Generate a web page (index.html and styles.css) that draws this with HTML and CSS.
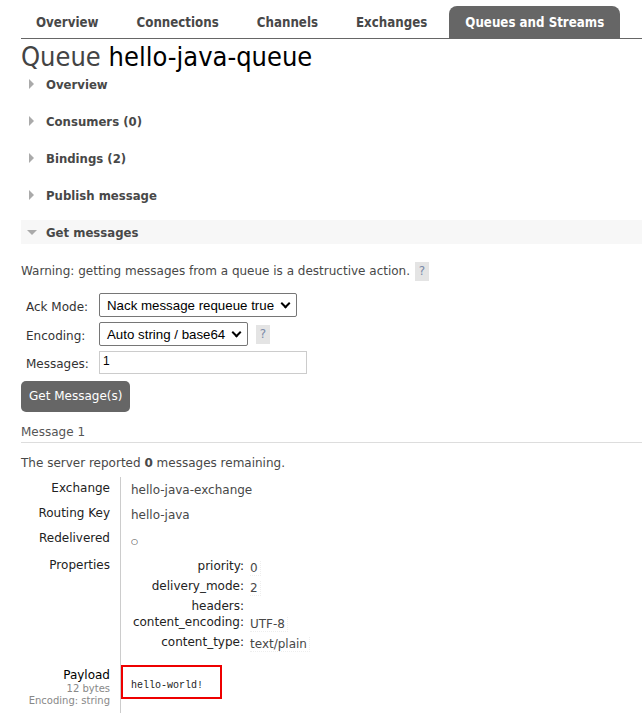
FILE: index.html
```html
<!DOCTYPE html>
<html>
<head>
<meta charset="utf-8">
<link rel="stylesheet" href="styles.css">
</head>
<body>
<div class="page">
  <ul class="tabs">
    <li class="tab">Overview</li>
    <li class="tab">Connections</li>
    <li class="tab">Channels</li>
    <li class="tab">Exchanges</li>
    <li class="tab active">Queues and Streams</li>
  </ul>
  <h1 class="title"><span class="kind">Queue</span> hello-java-queue</h1>

  <div class="sections">
    <div class="section"><span class="tri right"></span>Overview</div>
    <div class="section"><span class="tri right"></span>Consumers (0)</div>
    <div class="section"><span class="tri right"></span>Bindings (2)</div>
    <div class="section"><span class="tri right"></span>Publish message</div>
    <div class="section open"><span class="tri down"></span>Get messages</div>
  </div>

  <p class="warning">Warning: getting messages from a queue is a destructive action. <span class="help">?</span></p>

  <div class="form">
    <label class="flabel">Ack Mode:</label>
    <div class="fctl"><span class="select wide">Nack message requeue true<span class="chev"></span></span></div>
    <label class="flabel">Encoding:</label>
    <div class="fctl"><span class="select">Auto string / base64<span class="chev"></span></span><span class="help">?</span></div>
    <label class="flabel">Messages:</label>
    <div class="fctl"><span class="input">1</span></div>
  </div>

  <div class="btn">Get Message(s)</div>

  <div class="msghead">Message 1</div>
  <p class="remaining">The server reported <b>0</b> messages remaining.</p>

  <div class="facts">
    <div class="key">Exchange</div><div class="val">hello-java-exchange</div>
    <div class="key">Routing Key</div><div class="val">hello-java</div>
    <div class="key">Redelivered</div><div class="val"><span class="circle">○</span></div>
    <div class="key">Properties</div>
    <div class="val">
      <div class="props">
        <div class="pk">priority:</div><div class="pv"><span class="box">0</span></div>
        <div class="pk">delivery_mode:</div><div class="pv"><span class="box">2</span></div>
        <div class="pk tight">headers:</div><div class="pv tight"></div>
        <div class="pk tight2">content_encoding:</div><div class="pv tight2"><span class="box">UTF-8</span></div>
        <div class="pk">content_type:</div><div class="pv"><span class="box">text/plain</span></div>
      </div>
    </div>
    <div class="key payload">Payload<div class="sub">12 bytes</div><div class="sub">Encoding: string</div></div>
    <div class="val payload"><div class="pbox">hello-world!</div></div>
  </div>
</div>
</body>
</html>
```
FILE: styles.css
```css
* { box-sizing: border-box; }
body {
  margin: 0;
  background: #fff;
  font-family: "DejaVu Sans", sans-serif;
  font-size: 12px;
  color: #484848;
}
.page { padding-left: 21px; }
.tabs {
  list-style: none;
  margin: 0;
  padding: 6px 0 0 0;
  display: flex;
  border-bottom: 1px solid #666;
  height: 39px;
}
.tab {
  font-family: "DejaVu Sans Condensed", "DejaVu Sans", sans-serif;
  font-weight: bold;
  font-size: 13.2px;
  color: #484848;
  padding: 9px 19px 0 19px;
}
.tab:first-child { padding-left: 15px; }
.tab.active {
  background: #666;
  color: #fff;
  border-radius: 8px 8px 0 0;
  padding: 9px 16px 0 16px;
  margin-left: 3px;
  height: 32px;
}
.title {
  margin: 3px 0 0 0;
  font-weight: normal;
  font-size: 27px;
  line-height: 30px;
  color: #000;
  font-family: "DejaVu Sans Condensed", "DejaVu Sans", sans-serif;
}
.title .kind { color: #444; }
.sections { display: flex; flex-direction: column; gap: 13px; }
.section {
  height: 24px;
  font-family: "DejaVu Sans Condensed", "DejaVu Sans", sans-serif;
  font-weight: bold;
  font-size: 13px;
  color: #484848;
  padding-left: 25px;
  position: relative;
  display: flex;
  align-items: center;
}
.section.open { background: #f7f7f7; }
.tri {
  position: absolute;
  left: 6px;
  width: 0; height: 0;
}
.tri.right {
  border-top: 5px solid transparent;
  border-bottom: 5px solid transparent;
  border-left: 5px solid #aaa;
  left: 8px;
}
.tri.down {
  border-left: 5px solid transparent;
  border-right: 5px solid transparent;
  border-top: 5px solid #aaa;
}
.warning {
  margin: 17px 0 0 0;
  line-height: 20px;
  font-size: 12px;
}
.help {
  display: inline-block;
  background: #e4e4e4;
  color: #7b8aa8;
  width: 14px;
  height: 19px;
  line-height: 19px;
  text-align: center;
  vertical-align: middle;
  margin-left: 1px;
}
.form {
  display: grid;
  grid-template-columns: 78px auto;
  row-gap: 5px;
  margin-top: 12px;
  align-items: center;
}
.flabel {
  font-size: 12px;
  color: #333;
  padding-left: 5px;
  padding-top: 3px;
}
.fctl { display: flex; align-items: center; gap: 7px; }
.select {
  display: inline-flex;
  align-items: center;
  justify-content: space-between;
  height: 24px;
  border: 1px solid #767676;
  border-radius: 2px;
  padding: 0 5px 0 7px;
  font-family: "Liberation Sans", Arial, sans-serif;
  font-size: 13.3px;
  color: #000;
  width: 149px;
}
.select.wide { width: 198px; }
.chev {
  width: 7px; height: 7px;
  border-right: 2px solid #000;
  border-bottom: 2px solid #000;
  transform: rotate(45deg);
  margin-top: -4px;
  margin-right: 2px;
}
.input {
  display: block;
  width: 208px;
  height: 23px;
  border: 1px solid #ccc;
  padding: 2px 3px;
  font-family: "Liberation Sans", Arial, sans-serif;
  font-size: 12px;
  color: #000;
}
.btn {
  display: inline-block;
  margin-top: 7px;
  background: #666;
  color: #fff;
  border-radius: 5px;
  height: 31px;
  line-height: 31px;
  padding: 0 8px;
  font-size: 12px;
}
.msghead {
  margin-top: 12px;
  font-size: 12px;
  color: #555;
  padding-bottom: 2px;
  border-bottom: 1px solid #ddd;
  line-height: 16px;
}
.remaining { margin: 12px 0 0 0; line-height: 16px; }
.facts {
  display: grid;
  grid-template-columns: 99px 1fr;
  margin-top: 6px;
}
.key {
  text-align: right;
  padding-right: 10px;
  color: #222;
  line-height: 16px;
  padding-top: 3px;
  padding-bottom: 6px;
}
.val {
  border-left: 1px solid #ccc;
  padding-left: 10px;
  line-height: 16px;
  padding-top: 5px;
  padding-bottom: 4px;
}
.circle { font-size: 8px; color: #222; }
.props {
  display: grid;
  grid-template-columns: 117px auto;
  margin-top: -3px;
  padding-bottom: 9px;
}
.pk {
  text-align: right;
  color: #222;
  font-size: 12px;
  line-height: 16px;
  padding: 2px 4px 2px 0;
}
.pv { padding: 4px 0 0 2px; line-height: 16px; font-size: 12px; }
.pk.tight { padding-bottom: 0; }
.pk.tight2 { padding-top: 0; }
.pv.tight { padding-bottom: 0; }
.pv.tight2 { padding-top: 2px; }
.box { border-bottom: 1px dotted #eee; border-right: 1px dotted #eee; padding-right: 2px; }
.key.payload { color: #000; padding-top: 2px; }
.sub { font-size: 10px; color: #888; line-height: 12px; }
.val.payload { padding-left: 0; padding-top: 0; padding-bottom: 14px; }
.pbox {
  width: 101px;
  height: 34px;
  border: 2px solid #e00;
  font-family: "Liberation Mono", monospace;
  font-size: 10px;
  color: #222;
  padding: 11px 0 0 8px;
}
```
